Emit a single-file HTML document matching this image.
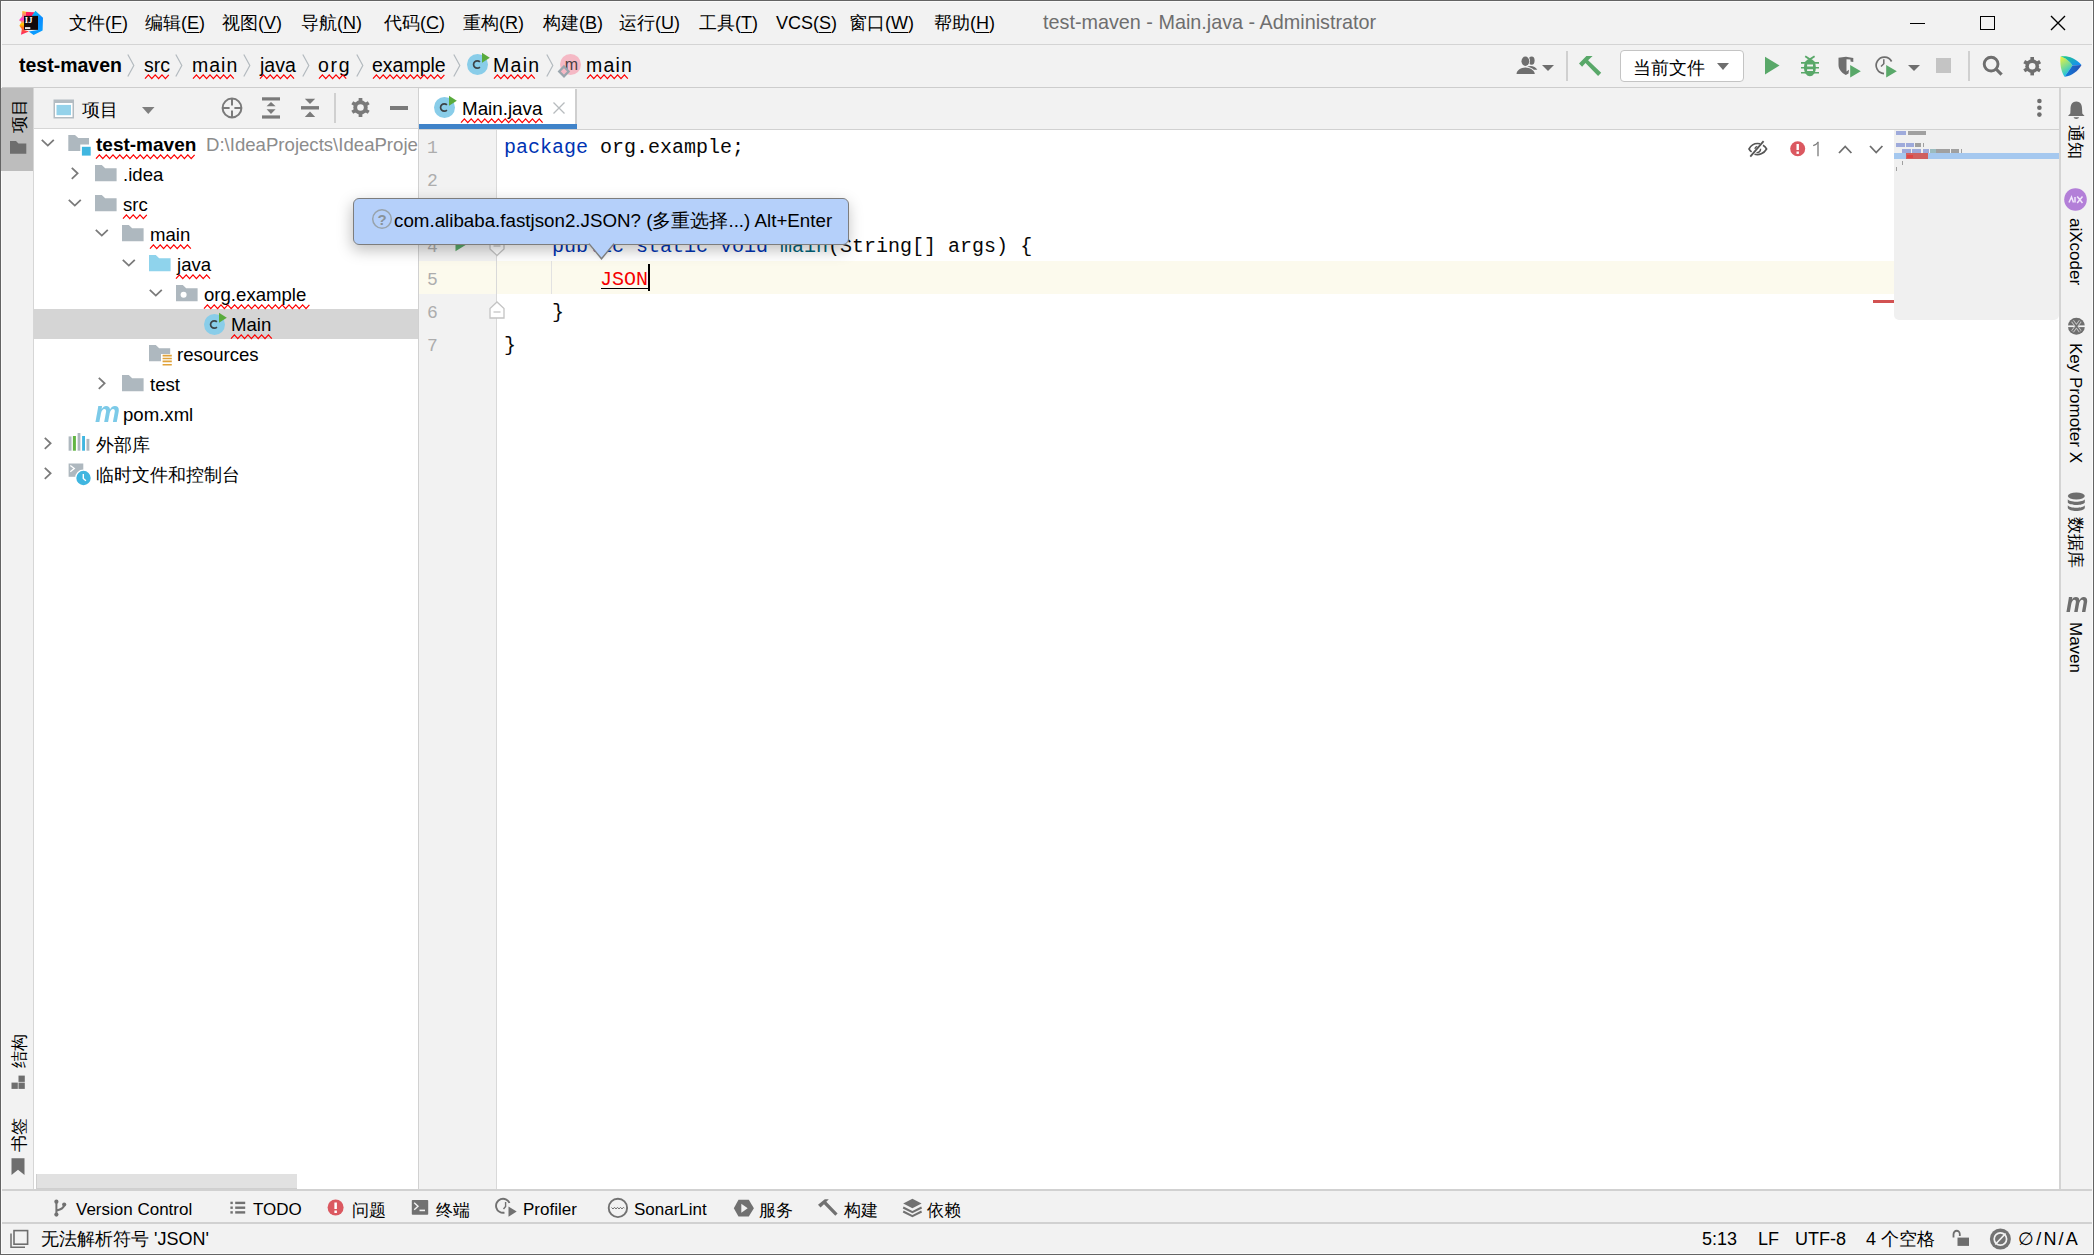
<!DOCTYPE html>
<html><head><meta charset="utf-8">
<style>
*{box-sizing:border-box;margin:0;padding:0}
html,body{width:2094px;height:1255px;overflow:hidden;background:#f2f2f2}
body{position:relative;font-family:"Liberation Sans",sans-serif;font-size:18px;color:#000}
.a{position:absolute}
.t{position:absolute;white-space:pre;line-height:1}
.sq{text-decoration:underline wavy #f00;text-decoration-thickness:1px;text-underline-offset:4px;text-decoration-skip-ink:none}
.ico{position:absolute;overflow:visible}
u{text-decoration-thickness:1px;text-underline-offset:3px}
</style></head><body>

<div class="a" style="left:0;top:0;width:2094px;height:1255px;border:1px solid #646464;z-index:100"></div>
<div class="a" style="left:1px;top:1px;width:2092px;height:1253px;border:1px solid #fafafa;z-index:99"></div>
<div class="a" style="left:0px;top:44px;width:2094px;height:1px;background:#d4d4d4;"></div>
<div class="a" style="left:0px;top:87px;width:2094px;height:1px;background:#cdcdcd;"></div>
<div class="a" style="left:33px;top:88px;width:1px;height:1101px;background:#d6d6d6;"></div>
<div class="a" style="left:1px;top:88px;width:32px;height:83px;background:#bdbdbd;z-index:101"></div>
<div class="a" style="left:34px;top:129px;width:384px;height:1060px;background:#fff;"></div>
<div class="a" style="left:34px;top:128px;width:384px;height:1px;background:#d6d6d6;"></div>
<div class="a" style="left:418px;top:88px;width:1px;height:1101px;background:#d1d1d1;"></div>
<div class="a" style="left:419px;top:129px;width:1641px;height:1060px;background:#fff;"></div>
<div class="a" style="left:419px;top:129px;width:1640px;height:1px;background:#d1d1d1;"></div>
<div class="a" style="left:419px;top:130px;width:77px;height:1059px;background:#f2f2f2;"></div>
<div class="a" style="left:2059px;top:88px;width:2px;height:1101px;background:#d4d4d4;"></div>
<div class="a" style="left:0px;top:1189px;width:2094px;height:2px;background:#d1d1d1;"></div>
<div class="a" style="left:0px;top:1222px;width:2094px;height:2px;background:#d1d1d1;"></div>
<svg class="ico" style="left:19px;top:11px;" width="24" height="24" viewBox="0 0 24 24">
 <defs><linearGradient id="ijg1" x1="0" y1="0" x2="0" y2="1"><stop offset="0" stop-color="#ffc01e"/><stop offset="0.35" stop-color="#ff3ccf"/><stop offset="0.55" stop-color="#ffd000"/><stop offset="0.7" stop-color="#ff6a1a"/><stop offset="1" stop-color="#ff1f6e"/></linearGradient>
 <linearGradient id="ijg2" x1="0" y1="0" x2="0.3" y2="1"><stop offset="0" stop-color="#08c8f2"/><stop offset="0.5" stop-color="#0a8cff"/><stop offset="1" stop-color="#0a9dff"/></linearGradient></defs>
 <path d="M3.4 0 L7 0.8 L11.5 1 L12.3 5 L5 5 L5 19 L10 20.5 L2 23.8 L2.8 18 L0.4 14.8 L2.5 11 L0 9.3 L3 5.5 Z" fill="url(#ijg1)"/>
 <path d="M7 1 L16 1.2 L13 5 L7 5 Z" fill="#ff1a5e"/>
 <path d="M16.4 -0.2 L24 6.7 L23.6 19.5 L14.6 24 L9.8 20.4 L19 19 L19 5 L12.8 5 Z" fill="url(#ijg2)"/>
 <rect x="5" y="4.9" width="14" height="14" fill="#120909"/>
 <text x="5.8" y="12.1" font-family="Liberation Serif" font-weight="bold" font-size="8.6" fill="#fff" letter-spacing="0.2">IJ</text>
 <rect x="6" y="16.2" width="5.3" height="1.7" fill="#fff"/>
</svg>
<div class="t" style="left:69px;top:14px;font-size:18px;color:#000;">文件(<u>F</u>)</div>
<div class="t" style="left:145px;top:14px;font-size:18px;color:#000;">编辑(<u>E</u>)</div>
<div class="t" style="left:222px;top:14px;font-size:18px;color:#000;">视图(<u>V</u>)</div>
<div class="t" style="left:301px;top:14px;font-size:18px;color:#000;">导航(<u>N</u>)</div>
<div class="t" style="left:384px;top:14px;font-size:18px;color:#000;">代码(<u>C</u>)</div>
<div class="t" style="left:463px;top:14px;font-size:18px;color:#000;">重构(<u>R</u>)</div>
<div class="t" style="left:543px;top:14px;font-size:18px;color:#000;">构建(<u>B</u>)</div>
<div class="t" style="left:619px;top:14px;font-size:18px;color:#000;">运行(<u>U</u>)</div>
<div class="t" style="left:699px;top:14px;font-size:18px;color:#000;">工具(<u>T</u>)</div>
<div class="t" style="left:776px;top:14px;font-size:18px;color:#000;">VCS(<u>S</u>)</div>
<div class="t" style="left:849px;top:14px;font-size:18px;color:#000;">窗口(<u>W</u>)</div>
<div class="t" style="left:934px;top:14px;font-size:18px;color:#000;">帮助(<u>H</u>)</div>
<div class="t" style="left:1043px;top:13px;font-size:19.8px;color:#6e6e6e;">test-maven - Main.java - Administrator</div>
<div class="a" style="left:1910px;top:23px;width:15px;height:1.3px;background:#000;"></div>
<div class="a" style="left:1980px;top:16px;width:15px;height:14px;border:1.5px solid #000"></div>
<svg class="ico" style="left:2050px;top:15px;" width="16" height="16" viewBox="0 0 16 16"><path d="M1 1 L15 15 M15 1 L1 15" stroke="#000" stroke-width="1.4"/></svg>
<svg width="0" height="0" style="position:absolute"><defs><pattern id="wave" width="6.8" height="5.5" patternUnits="userSpaceOnUse"><path d="M0 4.6 L3.4 0.7 L6.8 4.6" fill="none" stroke="#ff0000" stroke-width="1.25"/></pattern></defs></svg>
<div class="t" style="left:19px;top:56px;font-size:19.5px;color:#000;font-weight:bold;">test-maven</div>
<svg class="ico" style="left:127px;top:54px;" width="8" height="23" viewBox="0 0 8 23"><path d="M0.8 0.5 L6.8 11.5 L0.8 22.5" fill="none" stroke="#b3babf" stroke-width="1.2"/></svg>
<div class="t" style="left:144px;top:56px;font-size:19.5px;color:#000;">src</div>
<svg class="ico" style="left:145px;top:74px" width="24" height="6"><path d="M0.00 4.6 L3.40 0.9 L6.80 4.6 L10.20 0.9 L13.60 4.6 L17.00 0.9 L20.40 4.6 L23.80 0.9" fill="none" stroke="#ff0000" stroke-width="1.25"/></svg>
<svg class="ico" style="left:175px;top:54px;" width="8" height="23" viewBox="0 0 8 23"><path d="M0.8 0.5 L6.8 11.5 L0.8 22.5" fill="none" stroke="#b3babf" stroke-width="1.2"/></svg>
<div class="t" style="left:192px;top:56px;font-size:19.5px;color:#000;letter-spacing:1px">main</div>
<svg class="ico" style="left:193px;top:74px" width="43" height="6"><path d="M0.00 4.6 L3.40 0.9 L6.80 4.6 L10.20 0.9 L13.60 4.6 L17.00 0.9 L20.40 4.6 L23.80 0.9 L27.20 4.6 L30.60 0.9 L34.00 4.6 L37.40 0.9 L40.80 4.6" fill="none" stroke="#ff0000" stroke-width="1.25"/></svg>
<svg class="ico" style="left:243px;top:54px;" width="8" height="23" viewBox="0 0 8 23"><path d="M0.8 0.5 L6.8 11.5 L0.8 22.5" fill="none" stroke="#b3babf" stroke-width="1.2"/></svg>
<div class="t" style="left:260px;top:56px;font-size:19.5px;color:#000;">java</div>
<svg class="ico" style="left:260px;top:74px" width="34" height="6"><path d="M0.00 4.6 L3.40 0.9 L6.80 4.6 L10.20 0.9 L13.60 4.6 L17.00 0.9 L20.40 4.6 L23.80 0.9 L27.20 4.6 L30.60 0.9 L34.00 4.6" fill="none" stroke="#ff0000" stroke-width="1.25"/></svg>
<svg class="ico" style="left:302px;top:54px;" width="8" height="23" viewBox="0 0 8 23"><path d="M0.8 0.5 L6.8 11.5 L0.8 22.5" fill="none" stroke="#b3babf" stroke-width="1.2"/></svg>
<div class="t" style="left:318px;top:56px;font-size:19.5px;color:#000;letter-spacing:1.7px">org</div>
<svg class="ico" style="left:319px;top:74px" width="29" height="6"><path d="M0.00 4.6 L3.40 0.9 L6.80 4.6 L10.20 0.9 L13.60 4.6 L17.00 0.9 L20.40 4.6 L23.80 0.9 L27.20 4.6" fill="none" stroke="#ff0000" stroke-width="1.25"/></svg>
<svg class="ico" style="left:356px;top:54px;" width="8" height="23" viewBox="0 0 8 23"><path d="M0.8 0.5 L6.8 11.5 L0.8 22.5" fill="none" stroke="#b3babf" stroke-width="1.2"/></svg>
<div class="t" style="left:372px;top:56px;font-size:19.5px;color:#000;">example</div>
<svg class="ico" style="left:373px;top:74px" width="72" height="6"><path d="M0.00 4.6 L3.40 0.9 L6.80 4.6 L10.20 0.9 L13.60 4.6 L17.00 0.9 L20.40 4.6 L23.80 0.9 L27.20 4.6 L30.60 0.9 L34.00 4.6 L37.40 0.9 L40.80 4.6 L44.20 0.9 L47.60 4.6 L51.00 0.9 L54.40 4.6 L57.80 0.9 L61.20 4.6 L64.60 0.9 L68.00 4.6 L71.40 0.9" fill="none" stroke="#ff0000" stroke-width="1.25"/></svg>
<svg class="ico" style="left:453px;top:54px;" width="8" height="23" viewBox="0 0 8 23"><path d="M0.8 0.5 L6.8 11.5 L0.8 22.5" fill="none" stroke="#b3babf" stroke-width="1.2"/></svg>
<svg class="ico" style="left:467px;top:54px;" width="21" height="21" viewBox="0 0 21 21"><circle cx="10.5" cy="10.5" r="10.5" fill="#89cde9"/><path d="M12.9 7.9 A3.7 3.7 0 1 0 12.9 13.1" fill="none" stroke="#3d4347" stroke-width="1.7"/><path d="M15 -1.2 L22.8 3.8 L15 8.7 Z" fill="#59ab3c"/></svg>
<div class="t" style="left:493px;top:56px;font-size:19.5px;color:#000;letter-spacing:1.3px">Main</div>
<svg class="ico" style="left:494px;top:74px" width="44" height="6"><path d="M0.00 4.6 L3.40 0.9 L6.80 4.6 L10.20 0.9 L13.60 4.6 L17.00 0.9 L20.40 4.6 L23.80 0.9 L27.20 4.6 L30.60 0.9 L34.00 4.6 L37.40 0.9 L40.80 4.6" fill="none" stroke="#ff0000" stroke-width="1.25"/></svg>
<svg class="ico" style="left:546px;top:54px;" width="8" height="23" viewBox="0 0 8 23"><path d="M0.8 0.5 L6.8 11.5 L0.8 22.5" fill="none" stroke="#b3babf" stroke-width="1.2"/></svg>
<svg class="ico" style="left:560px;top:54px;" width="21" height="21" viewBox="0 0 21 21"><circle cx="10.5" cy="10.5" r="10.5" fill="#f5b9c5"/><text x="11.3" y="15.6" text-anchor="middle" font-family="Liberation Sans" font-size="16" fill="#4b3e42">m</text><path d="M4 12.5 L8.6 17.5 L4 22.3 L-0.8 17.5 Z" fill="#f5b9c5" stroke="#9aa5ad" stroke-width="2.3"/></svg>
<div class="t" style="left:586px;top:56px;font-size:19.5px;color:#000;letter-spacing:1.2px">main</div>
<svg class="ico" style="left:587px;top:74px" width="43" height="6"><path d="M0.00 4.6 L3.40 0.9 L6.80 4.6 L10.20 0.9 L13.60 4.6 L17.00 0.9 L20.40 4.6 L23.80 0.9 L27.20 4.6 L30.60 0.9 L34.00 4.6 L37.40 0.9 L40.80 4.6" fill="none" stroke="#ff0000" stroke-width="1.25"/></svg>
<svg class="ico" style="left:1510px;top:50px;" width="30" height="30" viewBox="0 0 30 30"><ellipse cx="21.6" cy="10.6" rx="3" ry="4.2" fill="#6e6e6e"/><path d="M17 17 C20 15 25.5 16 27.3 19.8 L20 19.8 Z" fill="#6e6e6e"/><g stroke="#f2f2f2" stroke-width="1.6"><ellipse cx="15.4" cy="11.2" rx="3.9" ry="4.7" fill="#6e6e6e"/><path d="M6.5 24.1 C6.8 19.5 11 17.8 15.4 17.4 C19.8 17.8 24.3 19.5 24.8 24.1 Z" fill="#6e6e6e"/></g><ellipse cx="15.4" cy="11.2" rx="3.9" ry="4.7" fill="#6e6e6e"/><path d="M6.5 24.1 C6.8 19.5 11 17.8 15.4 17.4 C19.8 17.8 24.3 19.5 24.8 24.1 Z" fill="#6e6e6e"/></svg>
<svg class="ico" style="left:1542px;top:65px;" width="12" height="6" viewBox="0 0 12 6"><path d="M0 0 L12 0 L6.0 6 Z" fill="#6e6e6e"/></svg>
<div class="a" style="left:1566px;top:51px;width:2px;height:30px;background:#d0d0d0;"></div>
<svg class="ico" style="left:1570px;top:50px;" width="40" height="30" viewBox="0 0 40 30"><path d="M9.0 13.6 L16.4 6.0 L22.6 6.0 L18.1 10.3 L31.2 22.7 L28.1 26.0 L15.5 13.1 L12.1 16.7 Z" fill="#59a869"/></svg>
<div class="a" style="left:1620px;top:50px;width:124px;height:32px;background:#fff;border:1px solid #c4c4c4;border-radius:4px"></div>
<div class="t" style="left:1633px;top:59px;font-size:18px;color:#000;">当前文件</div>
<svg class="ico" style="left:1717px;top:63px;" width="12" height="7" viewBox="0 0 12 7"><path d="M0 0 L12 0 L6.0 7 Z" fill="#6e6e6e"/></svg>
<svg class="ico" style="left:1765px;top:56px;" width="15" height="19" viewBox="0 0 15 19"><path d="M0 0.7 L14.5 9.5 L0 18.4 Z" fill="#59a869"/></svg>
<svg class="ico" style="left:1800px;top:55px;" width="20" height="23" viewBox="0 0 20 23"><path d="M5.2 1.2 L9.9 4.3 L14.6 1.2" fill="none" stroke="#59a869" stroke-width="1.8"/><ellipse cx="9.9" cy="12.5" rx="6" ry="8.8" fill="#59a869"/><path d="M1 7.9 H19 M1 12.8 H19 M1 17.8 H19" stroke="#59a869" stroke-width="1.6"/><path d="M7.1 10.5 H13 M7.1 15.1 H13" stroke="#f2f2f2" stroke-width="1.9"/></svg>
<svg class="ico" style="left:1838px;top:56px;" width="24" height="23" viewBox="0 0 24 23"><path d="M0.5 1.8 L8 0.8 L15.3 2 L15.3 6 L12.5 5.5 L12.5 3.6 L8.5 3.2 L8.5 15.5 L11 13.8 L10.5 17.5 L7.8 19 C3 16.5 0.6 13 0.5 9 Z" fill="#6e6e6e"/><path d="M12.2 8.9 L22.8 15.2 L12.2 21.6 Z" fill="#59a869"/></svg>
<svg class="ico" style="left:1874px;top:55px;" width="24" height="24" viewBox="0 0 24 24"><path d="M17.6 6.5 A8.2 8.2 0 1 0 10 18.6" fill="none" stroke="#6e6e6e" stroke-width="1.7"/><path d="M9.8 4.2 V8.8 L7 11.5" fill="none" stroke="#6e6e6e" stroke-width="1.5"/><path d="M12.2 9.9 L22.8 16.2 L12.2 22.6 Z" fill="#59a869"/></svg>
<svg class="ico" style="left:1908px;top:65px;" width="12" height="6" viewBox="0 0 12 6"><path d="M0 0 L12 0 L6.0 6 Z" fill="#6e6e6e"/></svg>
<div class="a" style="left:1936px;top:58px;width:15px;height:15px;background:#c4c4c4;"></div>
<div class="a" style="left:1968px;top:51px;width:2px;height:30px;background:#d0d0d0;"></div>
<svg class="ico" style="left:1980px;top:53px;" width="26" height="26" viewBox="0 0 26 26"><circle cx="11.1" cy="11.1" r="6.9" fill="none" stroke="#6e6e6e" stroke-width="2.9"/><path d="M16 16 L21.6 21.7" stroke="#6e6e6e" stroke-width="3.2"/></svg>
<svg class="ico" style="left:2022.8px;top:56.8px;" width="18.4" height="18.4" viewBox="0 0 18.4 18.4"><circle cx="9.2" cy="9.2" r="6.9" fill="#6e6e6e"/><rect x="7.3999999999999995" y="0" width="3.6" height="9.2" fill="#6e6e6e" transform="rotate(0.0 9.2 9.2)"/><rect x="7.3999999999999995" y="0" width="3.6" height="9.2" fill="#6e6e6e" transform="rotate(60.0 9.2 9.2)"/><rect x="7.3999999999999995" y="0" width="3.6" height="9.2" fill="#6e6e6e" transform="rotate(120.0 9.2 9.2)"/><rect x="7.3999999999999995" y="0" width="3.6" height="9.2" fill="#6e6e6e" transform="rotate(180.0 9.2 9.2)"/><rect x="7.3999999999999995" y="0" width="3.6" height="9.2" fill="#6e6e6e" transform="rotate(240.0 9.2 9.2)"/><rect x="7.3999999999999995" y="0" width="3.6" height="9.2" fill="#6e6e6e" transform="rotate(300.0 9.2 9.2)"/><circle cx="9.2" cy="9.2" r="3.3" fill="#f2f2f2"/></svg>
<svg class="ico" style="left:2060px;top:55px;" width="22" height="22" viewBox="0 0 22 22"><defs><linearGradient id="lg1" x1="0" y1="0" x2="0.4" y2="1"><stop offset="0" stop-color="#f7f33a"/><stop offset="0.55" stop-color="#7fdc8f"/><stop offset="1" stop-color="#12c2e9"/></linearGradient><linearGradient id="lg2" x1="0" y1="0" x2="1" y2="0.6"><stop offset="0" stop-color="#21d07a"/><stop offset="1" stop-color="#1790f0"/></linearGradient><linearGradient id="lg3" x1="0" y1="0" x2="1" y2="0"><stop offset="0" stop-color="#0a7fe0"/><stop offset="1" stop-color="#2a4fb0"/></linearGradient></defs><path d="M0.5 1.5 C0 8 0.3 15 4.5 21.7 L12.5 10.5 C9.5 6 5 2.5 0.5 1.5 Z" fill="url(#lg1)"/><path d="M0.5 1.5 C6 0.3 15 2 21.5 10 L12.5 10.5 C9.5 6 5 2.5 0.5 1.5 Z" fill="url(#lg2)"/><path d="M4.5 21.7 C12 21 18 16 21.5 10 L12.5 10.5 Z" fill="url(#lg3)"/></svg>
<svg class="ico" style="left:53px;top:99px;" width="22" height="20" viewBox="0 0 22 20"><rect x="0.5" y="0.5" width="20.5" height="19" fill="#b3bcc2"/><rect x="2" y="4" width="17.5" height="14" fill="#fff"/><rect x="3.5" y="5.9" width="14.5" height="10.3" fill="#94d2ea"/></svg>
<div class="t" style="left:82px;top:101px;font-size:18px;color:#000;">项目</div>
<svg class="ico" style="left:141.5px;top:107px;" width="12.5" height="7" viewBox="0 0 12.5 7"><path d="M0 0 L12.5 0 L6.25 7 Z" fill="#7f7f7f"/></svg>
<svg class="ico" style="left:221px;top:97px;" width="22" height="22" viewBox="0 0 22 22"><circle cx="11" cy="11" r="9.4" fill="none" stroke="#7a7a7a" stroke-width="2"/><path d="M11 1.5 V8.6 M11 13.4 V20.5 M1.5 11 H8.6 M13.4 11 H20.5" stroke="#7a7a7a" stroke-width="2"/></svg>
<svg class="ico" style="left:261px;top:97px;" width="20" height="22" viewBox="0 0 20 22"><rect x="1" y="0.3" width="18" height="3.2" fill="#7a7a7a"/><rect x="1" y="18.4" width="18" height="3.2" fill="#7a7a7a"/><path d="M5.6 9.3 L10 5 L14.6 9.3 Z M5.6 12.3 L10 17 L14.6 12.3 Z" fill="#7a7a7a"/></svg>
<svg class="ico" style="left:300px;top:97px;" width="20" height="22" viewBox="0 0 20 22"><rect x="1" y="9.1" width="18" height="3.4" fill="#7a7a7a"/><path d="M4.8 1.7 H15.2 L10 6.9 Z M4.8 20 H15.2 L10 14.6 Z" fill="#7a7a7a"/></svg>
<div class="a" style="left:334px;top:93px;width:2px;height:30px;background:#d0d0d0;"></div>
<svg class="ico" style="left:350.5px;top:98.3px;" width="19.0" height="19.0" viewBox="0 0 19.0 19.0"><circle cx="9.5" cy="9.5" r="7.2" fill="#7a7a7a"/><rect x="7.65" y="0" width="3.7" height="9.5" fill="#7a7a7a" transform="rotate(0.0 9.5 9.5)"/><rect x="7.65" y="0" width="3.7" height="9.5" fill="#7a7a7a" transform="rotate(60.0 9.5 9.5)"/><rect x="7.65" y="0" width="3.7" height="9.5" fill="#7a7a7a" transform="rotate(120.0 9.5 9.5)"/><rect x="7.65" y="0" width="3.7" height="9.5" fill="#7a7a7a" transform="rotate(180.0 9.5 9.5)"/><rect x="7.65" y="0" width="3.7" height="9.5" fill="#7a7a7a" transform="rotate(240.0 9.5 9.5)"/><rect x="7.65" y="0" width="3.7" height="9.5" fill="#7a7a7a" transform="rotate(300.0 9.5 9.5)"/><circle cx="9.5" cy="9.5" r="3.3" fill="#f2f2f2"/></svg>
<div class="a" style="left:390px;top:106px;width:18px;height:3.6px;background:#7a7a7a;"></div>
<div class="a" style="left:419px;top:89px;width:156px;height:35px;background:#fff;"></div>
<div class="a" style="left:575px;top:89px;width:2px;height:40px;background:#cfcfcf;"></div>
<div class="a" style="left:419px;top:124px;width:158px;height:5px;background:#4083c9;"></div>
<svg class="ico" style="left:433.5px;top:97px;" width="21" height="21" viewBox="0 0 21 21"><circle cx="10.5" cy="10.5" r="10.5" fill="#89cde9"/><path d="M12.9 7.9 A3.7 3.7 0 1 0 12.9 13.1" fill="none" stroke="#3d4347" stroke-width="1.7"/><path d="M15 -1.2 L22.8 3.8 L15 8.7 Z" fill="#59ab3c"/></svg>
<div class="t" style="left:462px;top:100px;font-size:18.8px;color:#000;">Main.java</div>
<svg class="ico" style="left:461px;top:118px" width="82" height="6"><path d="M0.00 4.6 L3.40 0.9 L6.80 4.6 L10.20 0.9 L13.60 4.6 L17.00 0.9 L20.40 4.6 L23.80 0.9 L27.20 4.6 L30.60 0.9 L34.00 4.6 L37.40 0.9 L40.80 4.6 L44.20 0.9 L47.60 4.6 L51.00 0.9 L54.40 4.6 L57.80 0.9 L61.20 4.6 L64.60 0.9 L68.00 4.6 L71.40 0.9 L74.80 4.6 L78.20 0.9 L81.60 4.6" fill="none" stroke="#ff0000" stroke-width="1.25"/></svg>
<svg class="ico" style="left:552px;top:101px;" width="14" height="14" viewBox="0 0 14 14"><path d="M1.5 1.5 L12.5 12.5 M12.5 1.5 L1.5 12.5" stroke="#b7bbbe" stroke-width="1.3"/></svg>
<svg class="ico" style="left:2036px;top:98px;" width="8" height="20" viewBox="0 0 8 20"><circle cx="3.4" cy="3" r="2.3" fill="#6e6e6e"/><circle cx="3.4" cy="9.8" r="2.3" fill="#6e6e6e"/><circle cx="3.4" cy="16.6" r="2.3" fill="#6e6e6e"/></svg>
<div class="a" style="left:34px;top:309px;width:384px;height:30px;background:#d5d5d5;"></div>
<svg class="ico" style="left:41px;top:139px;" width="14" height="8" viewBox="0 0 14 8"><path d="M0.8 0.8 L6.8 6.6 L12.8 0.8" fill="none" stroke="#7a7a7a" stroke-width="1.8"/></svg>
<svg class="ico" style="left:68px;top:135px;" width="24" height="21" viewBox="0 0 24 21"><path d="M0.3 0 H7 L10.3 3 H21 V9.6 H12.3 V16 H0.3 Z" fill="#aeb8bf"/><rect x="13.9" y="11.8" width="8.8" height="8.8" fill="#40b6e0"/></svg>
<div class="t" style="left:96px;top:135px;font-size:19px;color:#000;font-weight:bold;">test-maven</div>
<svg class="ico" style="left:96px;top:154px" width="100" height="6"><path d="M0.00 4.6 L3.40 0.9 L6.80 4.6 L10.20 0.9 L13.60 4.6 L17.00 0.9 L20.40 4.6 L23.80 0.9 L27.20 4.6 L30.60 0.9 L34.00 4.6 L37.40 0.9 L40.80 4.6 L44.20 0.9 L47.60 4.6 L51.00 0.9 L54.40 4.6 L57.80 0.9 L61.20 4.6 L64.60 0.9 L68.00 4.6 L71.40 0.9 L74.80 4.6 L78.20 0.9 L81.60 4.6 L85.00 0.9 L88.40 4.6 L91.80 0.9 L95.20 4.6 L98.60 0.9" fill="none" stroke="#ff0000" stroke-width="1.25"/></svg>
<div class="t" style="left:206px;top:136px;font-size:18.6px;color:#8c8c8c;width:212px;overflow:hidden;height:24px">D:\IdeaProjects\IdeaProjects\test-maven</div>
<svg class="ico" style="left:71px;top:167px;" width="8" height="13" viewBox="0 0 8 13"><path d="M0.8 0.8 L6.6 6.3 L0.8 11.8" fill="none" stroke="#7a7a7a" stroke-width="1.8"/></svg>
<svg class="ico" style="left:95px;top:165px;" width="22" height="17" viewBox="0 0 22 17"><path d="M0 0 H6.8 L10.2 3.2 H21.6 V16.2 H0 Z" fill="#aeb8bf"/></svg>
<div class="t" style="left:123px;top:166px;font-size:18.6px;color:#000;">.idea</div>
<svg class="ico" style="left:68px;top:199px;" width="14" height="8" viewBox="0 0 14 8"><path d="M0.8 0.8 L6.8 6.6 L12.8 0.8" fill="none" stroke="#7a7a7a" stroke-width="1.8"/></svg>
<svg class="ico" style="left:95px;top:195px;" width="22" height="17" viewBox="0 0 22 17"><path d="M0 0 H6.8 L10.2 3.2 H21.6 V16.2 H0 Z" fill="#aeb8bf"/></svg>
<div class="t" style="left:123px;top:196px;font-size:18.6px;color:#000;">src</div>
<svg class="ico" style="left:123px;top:214px" width="24" height="6"><path d="M0.00 4.6 L3.40 0.9 L6.80 4.6 L10.20 0.9 L13.60 4.6 L17.00 0.9 L20.40 4.6 L23.80 0.9" fill="none" stroke="#ff0000" stroke-width="1.25"/></svg>
<svg class="ico" style="left:95px;top:229px;" width="14" height="8" viewBox="0 0 14 8"><path d="M0.8 0.8 L6.8 6.6 L12.8 0.8" fill="none" stroke="#7a7a7a" stroke-width="1.8"/></svg>
<svg class="ico" style="left:122px;top:225px;" width="22" height="17" viewBox="0 0 22 17"><path d="M0 0 H6.8 L10.2 3.2 H21.6 V16.2 H0 Z" fill="#aeb8bf"/></svg>
<div class="t" style="left:150px;top:226px;font-size:18.6px;color:#000;">main</div>
<svg class="ico" style="left:150px;top:244px" width="43" height="6"><path d="M0.00 4.6 L3.40 0.9 L6.80 4.6 L10.20 0.9 L13.60 4.6 L17.00 0.9 L20.40 4.6 L23.80 0.9 L27.20 4.6 L30.60 0.9 L34.00 4.6 L37.40 0.9 L40.80 4.6" fill="none" stroke="#ff0000" stroke-width="1.25"/></svg>
<svg class="ico" style="left:122px;top:259px;" width="14" height="8" viewBox="0 0 14 8"><path d="M0.8 0.8 L6.8 6.6 L12.8 0.8" fill="none" stroke="#7a7a7a" stroke-width="1.8"/></svg>
<svg class="ico" style="left:149px;top:255px;" width="22" height="17" viewBox="0 0 22 17"><path d="M0 0 H6.8 L10.2 3.2 H21.6 V16.2 H0 Z" fill="#8fd3ec"/></svg>
<div class="t" style="left:177px;top:256px;font-size:18.6px;color:#000;">java</div>
<svg class="ico" style="left:176px;top:274px" width="34" height="6"><path d="M0.00 4.6 L3.40 0.9 L6.80 4.6 L10.20 0.9 L13.60 4.6 L17.00 0.9 L20.40 4.6 L23.80 0.9 L27.20 4.6 L30.60 0.9 L34.00 4.6" fill="none" stroke="#ff0000" stroke-width="1.25"/></svg>
<svg class="ico" style="left:149px;top:289px;" width="14" height="8" viewBox="0 0 14 8"><path d="M0.8 0.8 L6.8 6.6 L12.8 0.8" fill="none" stroke="#7a7a7a" stroke-width="1.8"/></svg>
<svg class="ico" style="left:176px;top:285px;" width="22" height="17" viewBox="0 0 22 17"><path d="M0 0 H6.8 L10.2 3.2 H21.6 V16.2 H0 Z" fill="#aeb8bf"/><circle cx="7.6" cy="9.8" r="3" fill="#fff"/></svg>
<div class="t" style="left:204px;top:286px;font-size:18.6px;color:#000;">org.example</div>
<svg class="ico" style="left:204px;top:304px" width="106" height="6"><path d="M0.00 4.6 L3.40 0.9 L6.80 4.6 L10.20 0.9 L13.60 4.6 L17.00 0.9 L20.40 4.6 L23.80 0.9 L27.20 4.6 L30.60 0.9 L34.00 4.6 L37.40 0.9 L40.80 4.6 L44.20 0.9 L47.60 4.6 L51.00 0.9 L54.40 4.6 L57.80 0.9 L61.20 4.6 L64.60 0.9 L68.00 4.6 L71.40 0.9 L74.80 4.6 L78.20 0.9 L81.60 4.6 L85.00 0.9 L88.40 4.6 L91.80 0.9 L95.20 4.6 L98.60 0.9 L102.00 4.6 L105.40 0.9" fill="none" stroke="#ff0000" stroke-width="1.25"/></svg>
<svg class="ico" style="left:203.5px;top:313.5px;" width="21" height="21" viewBox="0 0 21 21"><circle cx="10.5" cy="10.5" r="10.5" fill="#89cde9"/><path d="M12.9 7.9 A3.7 3.7 0 1 0 12.9 13.1" fill="none" stroke="#3d4347" stroke-width="1.7"/><path d="M15 -1.2 L22.8 3.8 L15 8.7 Z" fill="#59ab3c"/></svg>
<div class="t" style="left:231px;top:316px;font-size:18.6px;color:#000;">Main</div>
<svg class="ico" style="left:231px;top:334px" width="43" height="6"><path d="M0.00 4.6 L3.40 0.9 L6.80 4.6 L10.20 0.9 L13.60 4.6 L17.00 0.9 L20.40 4.6 L23.80 0.9 L27.20 4.6 L30.60 0.9 L34.00 4.6 L37.40 0.9 L40.80 4.6" fill="none" stroke="#ff0000" stroke-width="1.25"/></svg>
<svg class="ico" style="left:149px;top:345px;" width="24" height="21" viewBox="0 0 24 21"><path d="M0 0 H6.8 L10.2 3.2 H21.2 V9 H12 V16.2 H0 Z" fill="#aeb8bf"/><path d="M13.6 10.6 H22.8 M13.6 13.5 H22.8 M13.6 16.4 H22.8 M13.6 19.7 H22.8" stroke="#e0a23a" stroke-width="1.6"/></svg>
<div class="t" style="left:177px;top:346px;font-size:18.6px;color:#000;">resources</div>
<svg class="ico" style="left:98px;top:377px;" width="8" height="13" viewBox="0 0 8 13"><path d="M0.8 0.8 L6.6 6.3 L0.8 11.8" fill="none" stroke="#7a7a7a" stroke-width="1.8"/></svg>
<svg class="ico" style="left:122px;top:375px;" width="22" height="17" viewBox="0 0 22 17"><path d="M0 0 H6.8 L10.2 3.2 H21.6 V16.2 H0 Z" fill="#aeb8bf"/></svg>
<div class="t" style="left:150px;top:376px;font-size:18.6px;color:#000;">test</div>
<div class="t" style="left:95px;top:400px;font-size:26px;font-weight:bold;font-style:italic;color:#7ccae8;transform:scale(1.08,1.12);transform-origin:0 22px">m</div>
<div class="t" style="left:123px;top:406px;font-size:18.6px;color:#000;">pom.xml</div>
<svg class="ico" style="left:44px;top:437px;" width="8" height="13" viewBox="0 0 8 13"><path d="M0.8 0.8 L6.6 6.3 L0.8 11.8" fill="none" stroke="#7a7a7a" stroke-width="1.8"/></svg>
<svg class="ico" style="left:68px;top:433px;" width="22" height="19" viewBox="0 0 22 19"><rect x="0.6" y="3.4" width="2.9" height="14.3" fill="#aeb8bf"/><rect x="4.9" y="3" width="3" height="14.7" fill="#62b543"/><rect x="9.6" y="0" width="2.8" height="17.7" fill="#aeb8bf"/><rect x="14.1" y="3" width="2.9" height="14.7" fill="#40b6e0"/><rect x="18.5" y="5.9" width="2.9" height="11.8" fill="#aeb8bf"/></svg>
<div class="t" style="left:96px;top:436px;font-size:18px;color:#000;">外部库</div>
<svg class="ico" style="left:44px;top:467px;" width="8" height="13" viewBox="0 0 8 13"><path d="M0.8 0.8 L6.6 6.3 L0.8 11.8" fill="none" stroke="#7a7a7a" stroke-width="1.8"/></svg>
<svg class="ico" style="left:68px;top:463px;" width="24" height="24" viewBox="0 0 24 24"><rect x="0.6" y="0.5" width="14.7" height="13.3" fill="#aeb8bf"/><path d="M2.3 2.5 L6.3 5.6 L2.3 8.7" fill="none" stroke="#fff" stroke-width="1.3"/><circle cx="15.5" cy="15" r="8.4" fill="#fff"/><circle cx="15.5" cy="15" r="7.2" fill="#40b6e0"/><path d="M15.3 10.9 V15.4 L17.9 17.7" fill="none" stroke="#fff" stroke-width="1.4"/></svg>
<div class="t" style="left:96px;top:466px;font-size:18px;color:#000;">临时文件和控制台</div>
<div class="a" style="left:36px;top:1174px;width:261px;height:15px;background:#e1e1e1;border-left:1px solid #cfcfcf;border-bottom:1px solid #cfcfcf"></div>
<div class="a" style="left:419px;top:261px;width:1475px;height:33px;background:#fcfaed;"></div>
<div class="a" style="left:496px;top:130px;width:1px;height:1059px;background:#d9d9d9;"></div>
<div class="t" style="left:427px;top:139px;font-size:18px;color:#adadad;font-family:'Liberation Mono',monospace;">1</div>
<div class="t" style="left:427px;top:172px;font-size:18px;color:#adadad;font-family:'Liberation Mono',monospace;">2</div>
<div class="t" style="left:427px;top:205px;font-size:18px;color:#adadad;font-family:'Liberation Mono',monospace;">3</div>
<div class="t" style="left:427px;top:238px;font-size:18px;color:#adadad;font-family:'Liberation Mono',monospace;">4</div>
<div class="t" style="left:427px;top:271px;font-size:18px;color:#adadad;font-family:'Liberation Mono',monospace;">5</div>
<div class="t" style="left:427px;top:304px;font-size:18px;color:#adadad;font-family:'Liberation Mono',monospace;">6</div>
<div class="t" style="left:427px;top:337px;font-size:18px;color:#adadad;font-family:'Liberation Mono',monospace;">7</div>
<div class="t" style="left:504px;top:138px;font-size:20px;color:#080808;font-family:'Liberation Mono',monospace;"><span style="color:#0033b3">package</span> org.example;</div>
<div class="t" style="left:504px;top:204px;font-size:20px;color:#080808;font-family:'Liberation Mono',monospace;"><span style="color:#0033b3">public class</span> Main {</div>
<div class="t" style="left:504px;top:237px;font-size:20px;color:#080808;font-family:'Liberation Mono',monospace;">    <span style="color:#0033b3">public static void</span> <span style="color:#00627a">main</span>(String[] args) {</div>
<div class="t" style="left:504px;top:270px;font-size:20px;color:#080808;font-family:'Liberation Mono',monospace;">        <span style="color:#f50000">JSON</span></div>
<div class="t" style="left:504px;top:303px;font-size:20px;color:#080808;font-family:'Liberation Mono',monospace;">    }</div>
<div class="t" style="left:504px;top:336px;font-size:20px;color:#080808;font-family:'Liberation Mono',monospace;">}</div>
<div class="a" style="left:551px;top:261px;width:1px;height:33px;background:#e2e2e2;"></div>
<div class="a" style="left:601px;top:288px;width:47px;height:1px;background:#000;"></div>
<div class="a" style="left:648px;top:264px;width:2px;height:27px;background:#000;"></div>
<svg class="ico" style="left:455px;top:205px;" width="12" height="14" viewBox="0 0 12 14"><path d="M0.5 0.5 L11 6.8 L0.5 13.2 Z" fill="#59a869"/></svg>
<svg class="ico" style="left:455px;top:238px;" width="12" height="14" viewBox="0 0 12 14"><path d="M0.5 0.5 L11 6.8 L0.5 13.2 Z" fill="#59a869"/></svg>
<svg class="ico" style="left:489px;top:239px;" width="16" height="18" viewBox="0 0 16 18"><path d="M1 1 H15 V10 L8 16.5 L1 10 Z" fill="#fff" stroke="#c4c4c4" stroke-width="1.3"/><path d="M4.5 7 H11.5" stroke="#c4c4c4" stroke-width="1.3"/></svg>
<svg class="ico" style="left:489px;top:301px;" width="16" height="18" viewBox="0 0 16 18"><path d="M1 17 H15 V7.5 L8 1 L1 7.5 Z" fill="#fff" stroke="#c4c4c4" stroke-width="1.3"/><path d="M4.5 11 H11.5" stroke="#c4c4c4" stroke-width="1.3"/></svg>
<svg class="ico" style="left:1747px;top:140px;" width="22" height="18" viewBox="0 0 22 18"><path d="M4.6 11.8 C3.5 11 2.6 10 2 9 C4.5 4.5 9 3 13 3.8" fill="none" stroke="#555" stroke-width="1.6"/><path d="M7.5 14.2 C12 15.5 17 13.5 19.6 9 C18.8 7.5 17.5 6.2 16 5.3" fill="none" stroke="#555" stroke-width="1.6"/><path d="M7.8 8.8 C8.2 7.6 9 6.8 10.3 6.4" fill="none" stroke="#555" stroke-width="1.4"/><path d="M9.5 12.6 C12 12.6 13.6 11 13.6 8.8" fill="none" stroke="#555" stroke-width="1.4"/><path d="M3.3 16.6 L16.6 1.2" stroke="#555" stroke-width="1.8"/></svg>
<svg class="ico" style="left:1790px;top:141px;" width="16" height="16" viewBox="0 0 16 16"><circle cx="7.7" cy="7.7" r="7.5" fill="#db5860"/><rect x="6.5" y="3" width="2.4" height="6" fill="#fff"/><rect x="6.5" y="10.5" width="2.4" height="2.4" fill="#fff"/></svg>
<svg class="ico" style="left:1812px;top:141px;" width="9" height="16" viewBox="0 0 9 16"><path d="M6 0.8 V15.2" stroke="#7a7a7a" stroke-width="1.3"/><path d="M6 1.2 C5 3 3 4 1.2 4.6" fill="none" stroke="#7a7a7a" stroke-width="1.2"/></svg>
<svg class="ico" style="left:1838px;top:145px;" width="15" height="9" viewBox="0 0 15 9"><path d="M1 8 L7.2 1.5 L13.4 8" fill="none" stroke="#6e6e6e" stroke-width="1.8"/></svg>
<svg class="ico" style="left:1869px;top:145px;" width="15" height="9" viewBox="0 0 15 9"><path d="M1 1 L7.2 7.5 L13.4 1" fill="none" stroke="#6e6e6e" stroke-width="1.8"/></svg>
<div class="a" style="left:1873px;top:300px;width:21px;height:3px;background:#d25252;"></div>
<div class="a" style="left:1894px;top:130px;width:165px;height:190px;background:#f0f0f0;border-radius:0 0 5px 5px"></div>
<div class="a" style="left:1894px;top:153px;width:165px;height:6px;background:#a5c8ef;"></div>
<div class="a" style="left:1896px;top:131px;width:10px;height:4px;background:#9eaadb;"></div>
<div class="a" style="left:1908px;top:131px;width:18px;height:4px;background:#a0a0a0;"></div>
<div class="a" style="left:1896px;top:143px;width:9px;height:4px;background:#9eaadb;"></div>
<div class="a" style="left:1906px;top:143px;width:8px;height:4px;background:#9eaadb;"></div>
<div class="a" style="left:1915px;top:143px;width:6px;height:4px;background:#a0a0a0;"></div>
<div class="a" style="left:1923px;top:143px;width:1px;height:4px;background:#a0a0a0;"></div>
<div class="a" style="left:1902px;top:149px;width:9px;height:4px;background:#9eaadb;"></div>
<div class="a" style="left:1912px;top:149px;width:9px;height:4px;background:#9eaadb;"></div>
<div class="a" style="left:1923px;top:149px;width:6px;height:4px;background:#9eaadb;"></div>
<div class="a" style="left:1930px;top:149px;width:6px;height:4px;background:#9bbcc0;"></div>
<div class="a" style="left:1936px;top:149px;width:14px;height:4px;background:#a0a0a0;"></div>
<div class="a" style="left:1951px;top:149px;width:8px;height:4px;background:#a0a0a0;"></div>
<div class="a" style="left:1961px;top:149px;width:1px;height:4px;background:#a0a0a0;"></div>
<div class="a" style="left:1906px;top:153px;width:22px;height:6px;background:#d06060;"></div>
<div class="a" style="left:1907px;top:155px;width:6px;height:3px;background:#e04545;"></div>
<div class="a" style="left:1902px;top:161px;width:1px;height:4px;background:#a0a0a0;"></div>
<div class="a" style="left:1896px;top:167px;width:1px;height:4px;background:#a0a0a0;"></div>
<div class="a" style="left:353px;top:198px;width:496px;height:47px;border-radius:6px;box-shadow:-1px 5px 15px rgba(0,0,0,0.26);"></div>
<svg class="ico" style="left:588px;top:243px;" width="27" height="18" viewBox="0 0 27 18"><path d="M0 0 L13.5 16 L27 0 Z" fill="rgba(0,0,0,0.10)" filter="blur(2px)"/></svg>
<div class="a" style="left:353px;top:198px;width:496px;height:47px;border-radius:6px;background:#b5d0fa;border:1.4px solid #7d7d7d"></div>
<svg class="ico" style="left:589px;top:243px;" width="25" height="17" viewBox="0 0 25 17"><path d="M0 0.6 L12.5 15.8 L25 0.6" fill="#b5d0fa" stroke="#7d7d7d" stroke-width="1.4"/><rect x="1.5" y="-1" width="22" height="2.2" fill="#b5d0fa"/></svg>
<svg class="ico" style="left:372px;top:209px;" width="21" height="21" viewBox="0 0 21 21"><circle cx="10" cy="10" r="9.3" fill="none" stroke="#98a3ab" stroke-width="1.5"/><text x="10.2" y="15.6" text-anchor="middle" font-family="Liberation Sans" font-weight="bold" font-size="15" fill="#89939a">?</text></svg>
<div class="t" style="left:394px;top:212px;font-size:18.75px;color:#000;">com.alibaba.fastjson2.JSON? (多重选择...) Alt+Enter</div>
<div class="t" style="left:11px;top:133px;font-size:17px;transform:rotate(-90deg);transform-origin:0 0;z-index:102">项目</div>
<svg class="ico" style="left:10px;top:141px;z-index:102" width="17" height="14" viewBox="0 0 17 14"><path d="M0 0 H6 L8.5 2.6 H16.3 V12.8 H0 Z" fill="#6e6e6e"/></svg>
<div class="t" style="left:11px;top:1068px;font-size:17px;transform:rotate(-90deg);transform-origin:0 0">结构</div>
<svg class="ico" style="left:11px;top:1075px;" width="15" height="15" viewBox="0 0 15 15"><rect x="7.5" y="0.6" width="6.3" height="6.3" fill="#6e6e6e"/><rect x="0.5" y="7.6" width="6.3" height="6.3" fill="#6e6e6e"/><rect x="7.5" y="7.6" width="6.3" height="6.3" fill="#6e6e6e"/></svg>
<div class="t" style="left:11px;top:1152px;font-size:17px;transform:rotate(-90deg);transform-origin:0 0">书签</div>
<svg class="ico" style="left:11px;top:1158px;" width="15" height="18" viewBox="0 0 15 18"><path d="M0.5 0.3 H13.5 V17 L7 11.8 L0.5 17 Z" fill="#6e6e6e"/></svg>
<svg class="ico" style="left:2067px;top:100px;" width="19" height="21" viewBox="0 0 19 21"><path d="M9.3 1.5 C4.5 1.5 3.5 5.5 3.5 9.5 L3.3 13.5 L1 16 H17.6 L15.3 13.5 L15.1 9.5 C15.1 5.5 14.1 1.5 9.3 1.5 Z" fill="#6e6e6e"/><path d="M6.6 17.2 C7 19.5 11.6 19.5 12 17.2 Z" fill="#6e6e6e"/></svg>
<div class="t" style="left:2084px;top:125px;font-size:17px;transform:rotate(90deg);transform-origin:0 0">通知</div>
<svg class="ico" style="left:2064px;top:188px;" width="23" height="23" viewBox="0 0 23 23"><circle cx="11.5" cy="11.5" r="11.3" fill="#b37fd8"/><path d="M5 14.5 L7.5 9 L9.5 14.5 M11 9 V14.5 M13.2 8.5 L18.5 15 M18.5 8.5 L13.2 15" fill="none" stroke="#f1e6fb" stroke-width="1.5"/></svg>
<div class="t" style="left:2084px;top:218px;font-size:17px;transform:rotate(90deg);transform-origin:0 0">aiXcoder</div>
<svg class="ico" style="left:2067px;top:317px;" width="19" height="19" viewBox="0 0 19 19"><circle cx="9.4" cy="9.2" r="8.5" fill="#6e6e6e"/><rect x="0" y="8.4" width="19" height="1.7" fill="#f2f2f2"/><path d="M5.5 4 L13.3 14.5 M13.3 4 L5.5 14.5" stroke="#c9c9c9" stroke-width="3.2"/><path d="M5.5 4 L13.3 14.5 M13.3 4 L5.5 14.5" stroke="#6e6e6e" stroke-width="1.4"/></svg>
<div class="t" style="left:2084px;top:343px;font-size:17px;transform:rotate(90deg);transform-origin:0 0">Key Promoter X</div>
<svg class="ico" style="left:2067px;top:492px;" width="19" height="21" viewBox="0 0 19 21"><ellipse cx="9.3" cy="4" rx="8.5" ry="3.5" fill="#6e6e6e"/><path d="M0.8 7.2 C2 10.5 16.6 10.5 17.8 7.2 V10.4 C16.6 13.7 2 13.7 0.8 10.4 Z" fill="#6e6e6e"/><path d="M0.8 13.3 C2 16.6 16.6 16.6 17.8 13.3 V16 C16.6 20 2 20 0.8 16 Z" fill="#6e6e6e"/></svg>
<div class="t" style="left:2084px;top:517px;font-size:17px;transform:rotate(90deg);transform-origin:0 0">数据库</div>
<div class="t" style="left:2066px;top:591px;font-size:25px;font-weight:bold;font-style:italic;color:#6e6e6e;transform:scaleY(1.1);transform-origin:0 20px">m</div>
<div class="t" style="left:2084px;top:622px;font-size:17px;transform:rotate(90deg);transform-origin:0 0">Maven</div>
<svg class="ico" style="left:52px;top:1198px;" width="16" height="20" viewBox="0 0 16 20"><circle cx="4.4" cy="3.7" r="2.1" fill="#717171"/><circle cx="12.2" cy="6.6" r="2.1" fill="#717171"/><circle cx="4.4" cy="16.6" r="2.1" fill="#717171"/><path d="M4.4 3.7 V16.6 M12.2 6.6 C12.2 11 8 11.5 4.4 12.5" fill="none" stroke="#717171" stroke-width="2"/></svg>
<div class="t" style="left:76px;top:1201px;font-size:17px;color:#000;">Version Control</div>
<svg class="ico" style="left:230px;top:1200px;" width="16" height="15" viewBox="0 0 16 15"><rect x="0.4" y="1.7" width="2.4" height="2.4" fill="#717171"/><rect x="0.4" y="6.5" width="2.4" height="2.4" fill="#717171"/><rect x="0.4" y="11.2" width="2.4" height="2.4" fill="#717171"/><rect x="5.2" y="1.7" width="10" height="2.4" fill="#717171"/><rect x="5.2" y="6.5" width="10" height="2.4" fill="#717171"/><rect x="5.2" y="11.2" width="10" height="2.4" fill="#717171"/></svg>
<div class="t" style="left:253px;top:1201px;font-size:17px;color:#000;">TODO</div>
<svg class="ico" style="left:327px;top:1199px;" width="18" height="18" viewBox="0 0 18 18"><circle cx="8.6" cy="8.5" r="8" fill="#db5860"/><rect x="7.4" y="3.5" width="2.5" height="6.5" fill="#fff"/><rect x="7.4" y="11.5" width="2.5" height="2.5" fill="#fff"/></svg>
<div class="t" style="left:352px;top:1202px;font-size:17px;color:#000;">问题</div>
<svg class="ico" style="left:411px;top:1199px;" width="18" height="17" viewBox="0 0 18 17"><rect x="0.8" y="1" width="16.4" height="14.7" rx="0.8" fill="#717171"/><path d="M3.2 3.8 L7 7.3 L3.2 10.8" fill="none" stroke="#f2f2f2" stroke-width="1.4"/><rect x="8.5" y="10.6" width="5.5" height="1.6" fill="#f2f2f2"/></svg>
<div class="t" style="left:436px;top:1202px;font-size:17px;color:#000;">终端</div>
<svg class="ico" style="left:496px;top:1197px;" width="23" height="22" viewBox="0 0 23 22"><path d="M13.5 6 A7 7 0 1 0 8.5 15.6" fill="none" stroke="#717171" stroke-width="1.9"/><path d="M9.6 5 V9.5 L7.5 12" fill="none" stroke="#717171" stroke-width="1.4"/><path d="M12.5 9.5 L20.7 14.5 L12.5 19.8 Z" fill="#717171"/></svg>
<div class="t" style="left:523px;top:1201px;font-size:17px;color:#000;">Profiler</div>
<svg class="ico" style="left:607px;top:1197px;" width="22" height="22" viewBox="0 0 22 22"><circle cx="10.9" cy="10.9" r="9.2" fill="none" stroke="#717171" stroke-width="1.9"/><path d="M4.5 10.5 L6 12 L7.5 10.3 L9 12 L10.5 10.3 L12 12 L13.5 10.3 L15 12 L16.5 10.3 L17.5 11.3" fill="none" stroke="#717171" stroke-width="1"/></svg>
<div class="t" style="left:634px;top:1201px;font-size:17px;color:#000;">SonarLint</div>
<svg class="ico" style="left:733px;top:1199px;" width="22" height="19" viewBox="0 0 22 19"><path d="M5.5 0.8 H15.8 L20.9 9.2 L15.8 17.6 H5.5 L0.8 9.2 Z" fill="#717171"/><path d="M8.3 4.8 L14.7 9.2 L8.3 13.7 Z" fill="#f2f2f2"/></svg>
<div class="t" style="left:759px;top:1202px;font-size:17px;color:#000;">服务</div>
<svg class="ico" style="left:817px;top:1198px;" width="22" height="21" viewBox="0 0 22 21"><path d="M1 6.8 L7.8 1.2 L11.8 1.2 L9.3 3.8 L20.6 15.4 L18.3 17.8 L7 6.2 L3.5 9.5 Z" fill="#717171"/></svg>
<div class="t" style="left:844px;top:1202px;font-size:17px;color:#000;">构建</div>
<svg class="ico" style="left:902px;top:1198px;" width="21" height="21" viewBox="0 0 21 21"><path d="M10.4 0.8 L19.6 5.5 L10.4 10.3 L1.2 5.5 Z" fill="#717171"/><path d="M1.2 9.5 L10.4 14.2 L19.6 9.5 M1.2 13.5 L10.4 18.2 L19.6 13.5" fill="none" stroke="#717171" stroke-width="2"/></svg>
<div class="t" style="left:927px;top:1202px;font-size:17px;color:#000;">依赖</div>
<svg class="ico" style="left:9px;top:1229px;" width="21" height="20" viewBox="0 0 21 20"><path d="M2 4.5 V18.2 H16" fill="none" stroke="#6e6e6e" stroke-width="1.5"/><rect x="5" y="1.6" width="13.6" height="13.6" fill="none" stroke="#6e6e6e" stroke-width="1.6"/></svg>
<div class="t" style="left:41px;top:1230px;font-size:18px;color:#000;">无法解析符号 'JSON'</div>
<div class="t" style="left:1702px;top:1230px;font-size:18px;color:#000;">5:13</div>
<div class="t" style="left:1758px;top:1230px;font-size:18px;color:#000;">LF</div>
<div class="t" style="left:1795px;top:1230px;font-size:18px;color:#000;">UTF-8</div>
<div class="t" style="left:1866px;top:1230px;font-size:18px;color:#000;">4 个空格</div>
<svg class="ico" style="left:1951px;top:1229px;" width="20" height="19" viewBox="0 0 20 19"><path d="M2.5 8.5 V5.2 C2.5 0.6 8.8 0.6 8.8 5.2 V7" fill="none" stroke="#6e6e6e" stroke-width="1.8"/><rect x="6.5" y="8.6" width="11.5" height="8.3" fill="#6e6e6e"/></svg>
<svg class="ico" style="left:1989px;top:1228px;" width="23" height="22" viewBox="0 0 23 22"><circle cx="11.4" cy="11" r="10.5" fill="#737373"/><circle cx="11.4" cy="11" r="6.2" fill="none" stroke="#f2f2f2" stroke-width="1.7"/><path d="M6.2 16.5 L16.6 5.5" stroke="#f2f2f2" stroke-width="1.7"/></svg>
<div class="t" style="left:2018px;top:1230px;font-size:18px;color:#000;letter-spacing:2.2px">∅/N/A</div>
</body></html>
